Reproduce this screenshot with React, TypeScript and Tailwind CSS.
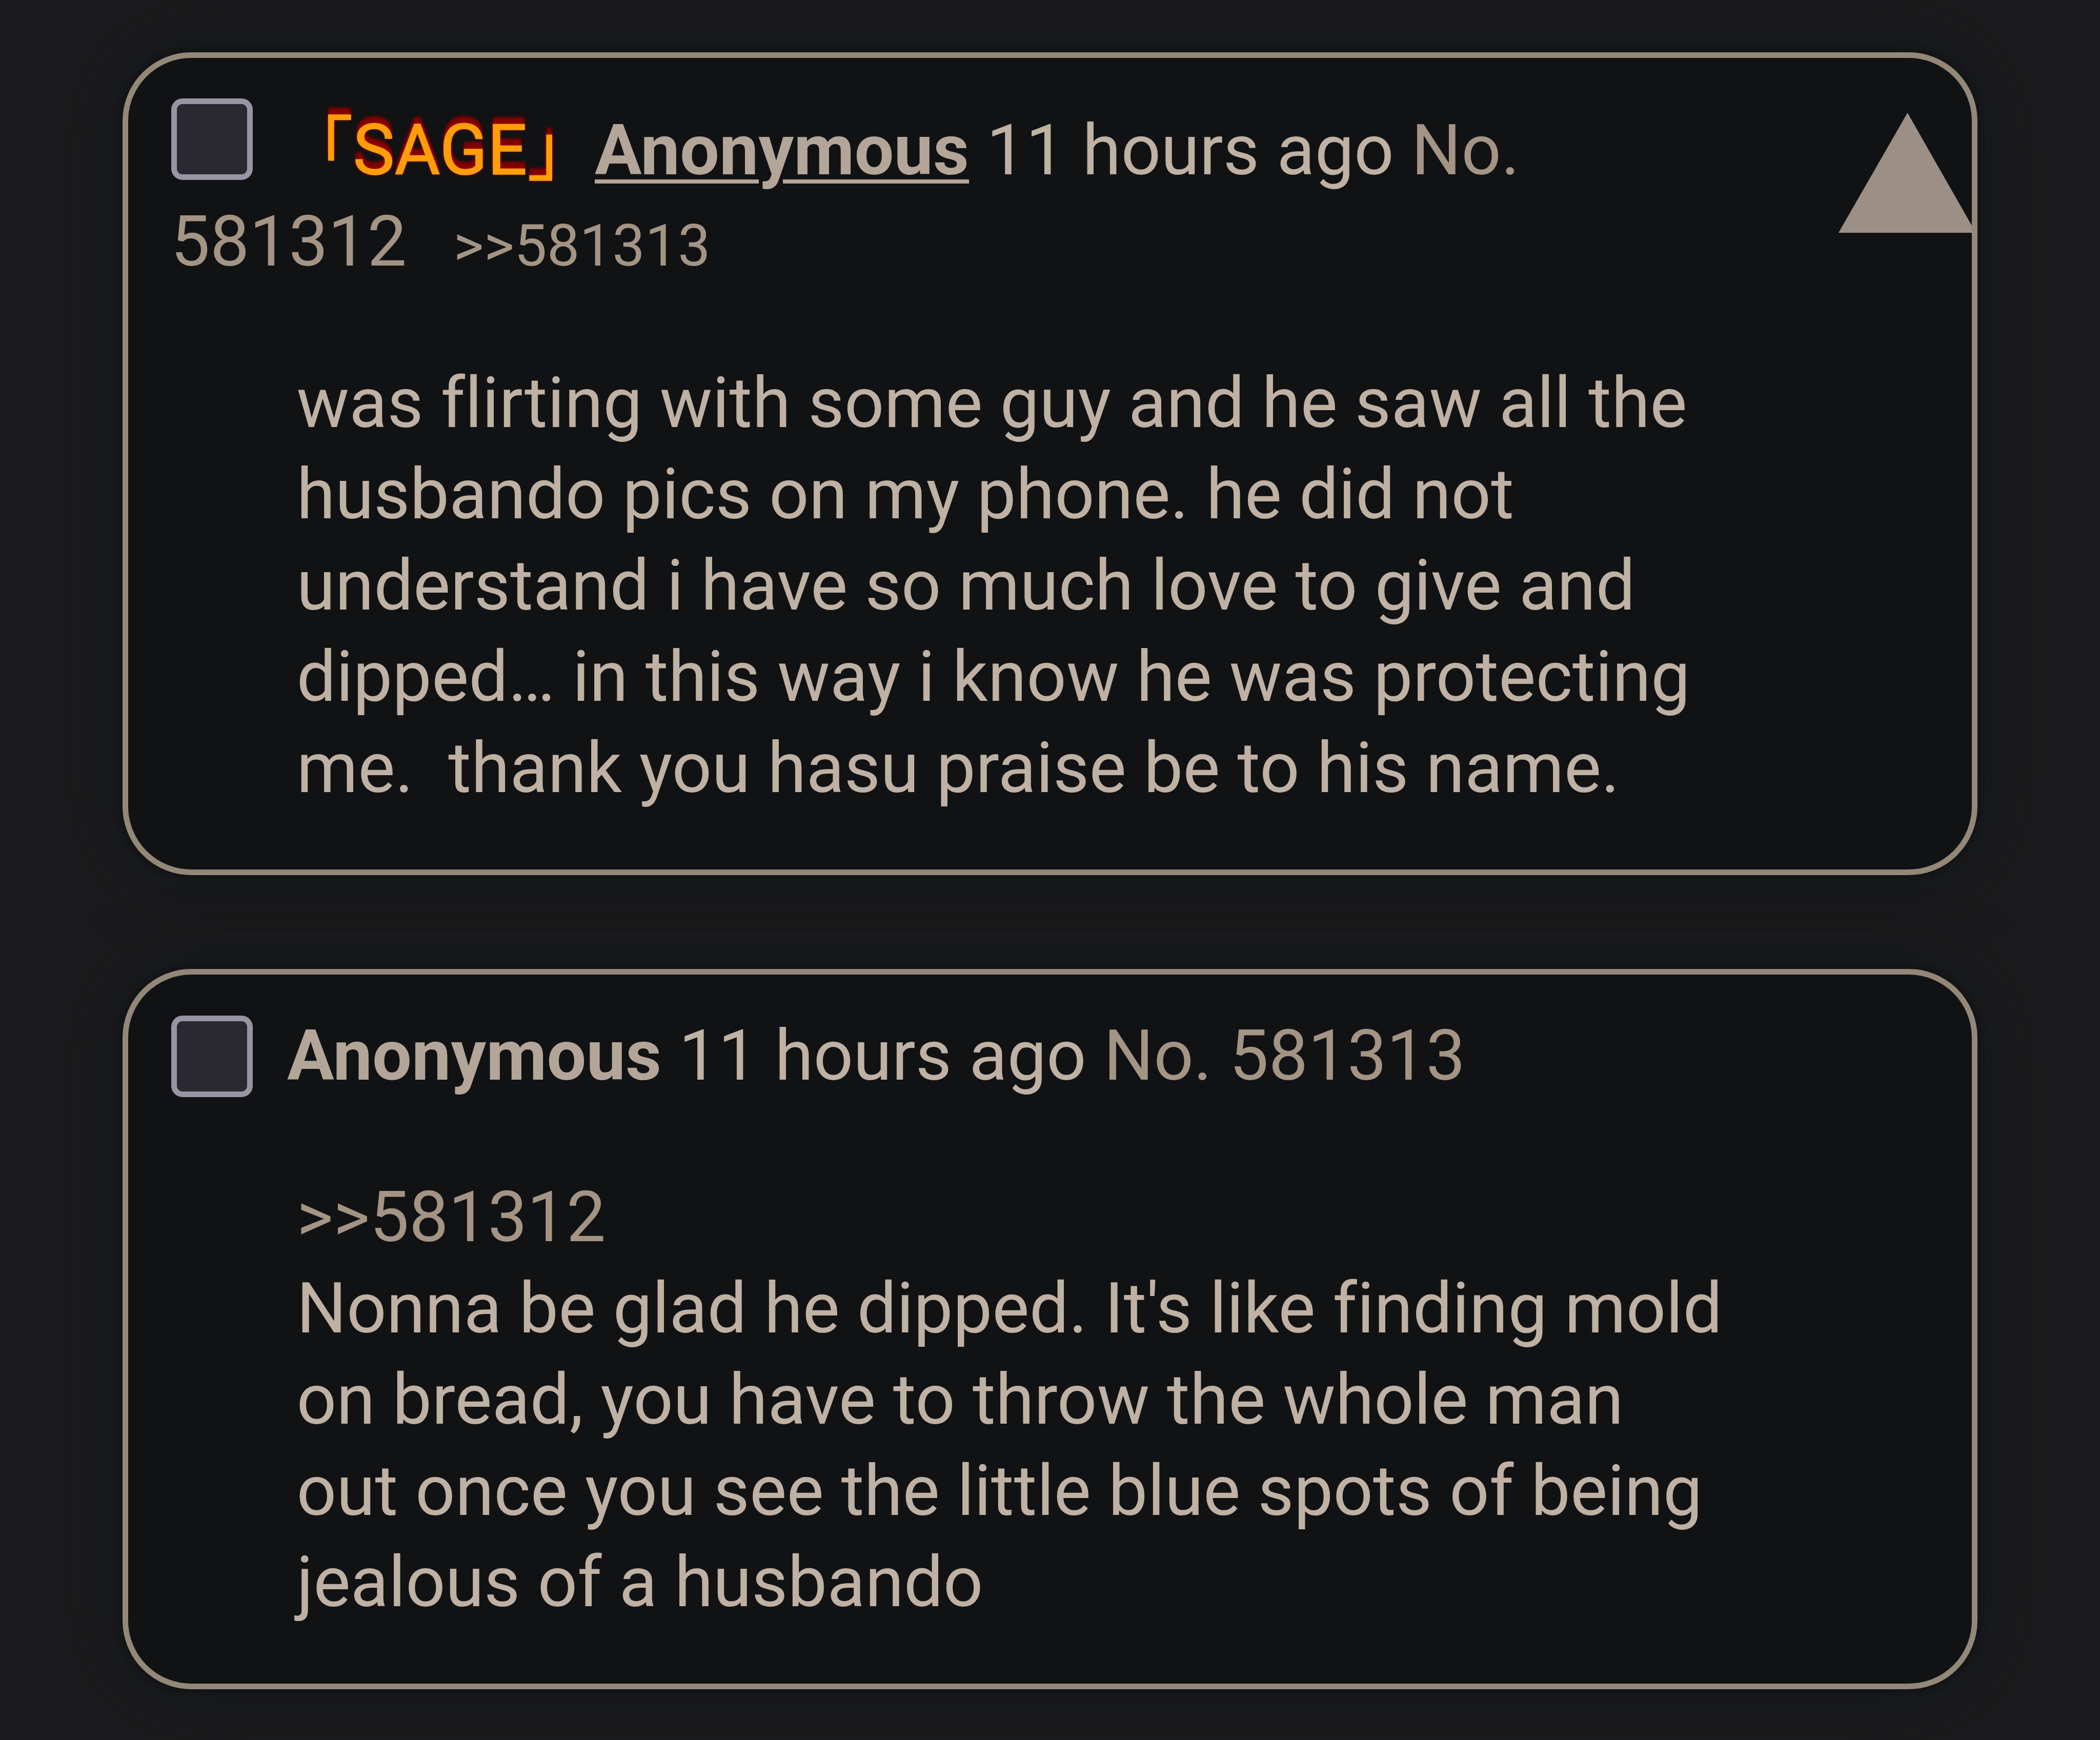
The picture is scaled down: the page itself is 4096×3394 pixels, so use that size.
import React from "react";

const LINE = "block h-[178px] leading-[178px] whitespace-pre";

function Checkbox() {
  return (
    <span className="block h-[159px] w-[159px] shrink-0 rounded-[22px] border-[11px] border-[#9894a4] bg-[#2a2830]" />
  );
}

function Card({ className, children }: { className: string; children: React.ReactNode }) {
  return (
    <article
      className={`relative w-[3618px] rounded-[134px] border-[11px] border-[#938778] bg-[#111214] shadow-[0_0_130px_10px_rgba(15,20,24,0.6),0_0_14px_2px_rgba(10,10,10,0.6)] ${className}`}
    >
      {children}
    </article>
  );
}

function Body({ className, lines }: { className: string; lines: string[] }) {
  return (
    <div className={`ml-[328.5px] text-[#bfb1a3] ${className}`}>
      {lines.map((line) => (
        <span key={line} className={LINE}>
          {line.startsWith(">>") ? <a className="text-[#a39484]">{line}</a> : line}
        </span>
      ))}
    </div>
  );
}

export default function App() {
  return (
    <main className="flex h-[3394px] w-[4096px] flex-col gap-[183px] overflow-hidden bg-[#1b1b1d] pt-[102px] pl-[239px] font-['Roboto','Noto_Sans_CJK_JP',sans-serif] text-[136.5px] [font-variant-ligatures:none]">
      <Card className="h-[1605px]">
        <svg className="absolute top-[107px] right-0 h-[236px] w-[260px]" viewBox="0 0 260 236">
          <polygon points="134.5,0 0,234 268,234" fill="#9c9086" />
        </svg>
        <header className="pt-[91px] pl-[83px]">
          <div className="flex h-[178px] items-start">
            <div className="-mt-[12px] w-[219px] pl-px">
              <Checkbox />
            </div>
            <span
              className={`${LINE} w-[608px] text-[#ff9d0a] [-webkit-text-stroke:1.5px_#ff9d0a] [text-shadow:0_0_5px_#c01800,0_-7px_4px_#860000,0_-14px_5px_#860000]`}
            >
              「SAGE」
            </span>
            <span className={`${LINE} text-[#bfb1a3]`}>
              <b className="font-bold text-[#b3a698] underline decoration-[8px] underline-offset-[10px]">Anonymous</b>
              {" 11 hours ago "}
              <a className="text-[#a39484]">No.</a>
            </span>
          </div>
          <div className="flex items-baseline text-[#a39484]">
            <span className={LINE}>581312</span>
            <span className={`${LINE} ml-[91px] text-[113.5px]`}>{">>581313"}</span>
          </div>
        </header>
        <Body
          className="mt-[128px]"
          lines={[
            "was flirting with some guy and he saw all the",
            "husbando pics on my phone. he did not",
            "understand i have so much love to give and",
            "dipped… in this way i know he was protecting",
            "me.  thank you hasu praise be to his name.",
          ]}
        />
      </Card>
      <Card className="h-[1405px]">
        <header className="flex h-[247px] items-start pt-[69px] pl-[84px]">
          <div className="mt-[11px] w-[226px]">
            <Checkbox />
          </div>
          <span className={`${LINE} text-[#bfb1a3]`}>
            <b className="font-bold text-[#b3a698]">Anonymous</b>
            {" 11 hours ago "}
            <a className="text-[#a39484]">No. 581313</a>
          </span>
        </header>
        <Body
          className="mt-[137px]"
          lines={[
            ">>581312",
            "Nonna be glad he dipped. It's like finding mold",
            "on bread, you have to throw the whole man",
            "out once you see the little blue spots of being",
            "jealous of a husbando",
          ]}
        />
      </Card>
    </main>
  );
}
